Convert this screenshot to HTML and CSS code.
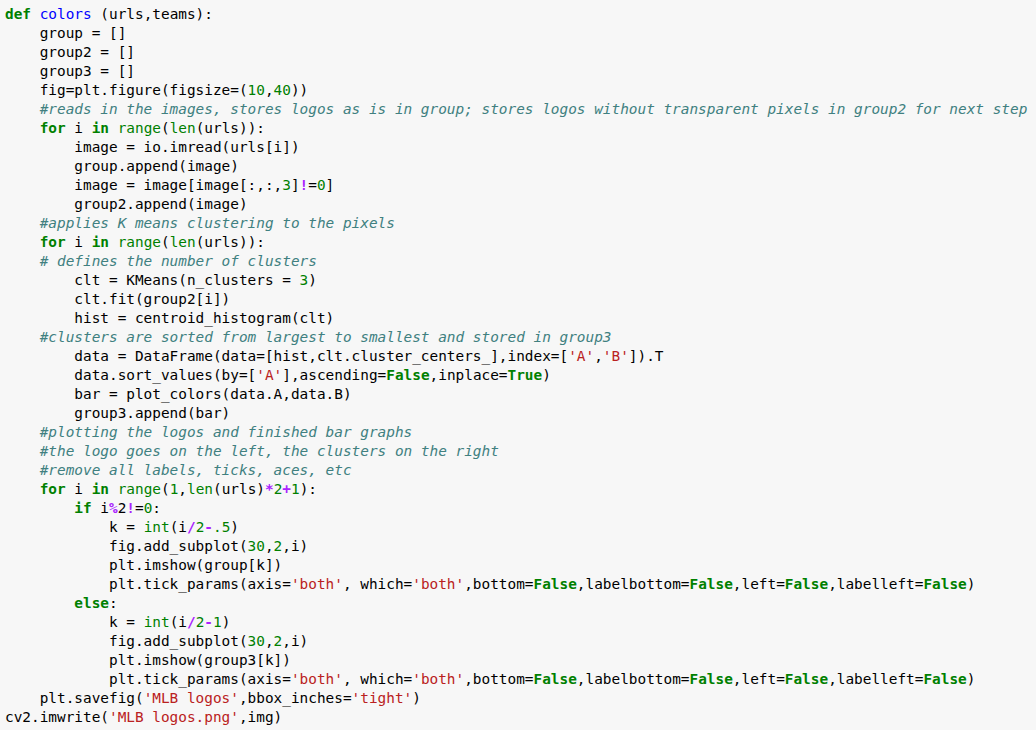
FILE: index.html
```html
<!DOCTYPE html>
<html>
<head>
<meta charset="utf-8">
<link rel="stylesheet" href="styles.css">
</head>
<body>
<div class="cell">
<pre class="code"><span class="k">def</span> <span class="f">colors</span> (urls,teams):
    group = []
    group2 = []
    group3 = []
    fig=plt.figure(figsize=(<span class="n">10</span>,<span class="n">40</span>))
    <span class="c">#reads in the images, stores logos as is in group; stores logos without transparent pixels in group2 for next step</span>
    <span class="k">for</span> i <span class="k">in</span> <span class="b">range</span>(<span class="b">len</span>(urls)):
        image = io.imread(urls[i])
        group.append(image)
        image = image[image[:,:,<span class="n">3</span>]<span class="o">!</span>=<span class="n">0</span>]
        group2.append(image)
    <span class="c">#applies K means clustering to the pixels</span>
    <span class="k">for</span> i <span class="k">in</span> <span class="b">range</span>(<span class="b">len</span>(urls)):
    <span class="c"># defines the number of clusters</span>
        clt = KMeans(n_clusters = <span class="n">3</span>)
        clt.fit(group2[i])
        hist = centroid_histogram(clt)
    <span class="c">#clusters are sorted from largest to smallest and stored in group3</span>
        data = DataFrame(data=[hist,clt.cluster_centers_],index=[<span class="s">'A'</span>,<span class="s">'B'</span>]).T
        data.sort_values(by=[<span class="s">'A'</span>],ascending=<span class="k">False</span>,inplace=<span class="k">True</span>)
        bar = plot_colors(data.A,data.B)
        group3.append(bar)
    <span class="c">#plotting the logos and finished bar graphs</span>
    <span class="c">#the logo goes on the left, the clusters on the right</span>
    <span class="c">#remove all labels, ticks, aces, etc</span>
    <span class="k">for</span> i <span class="k">in</span> <span class="b">range</span>(<span class="n">1</span>,<span class="b">len</span>(urls)<span class="o">*</span><span class="n">2</span><span class="o">+</span><span class="n">1</span>):
        <span class="k">if</span> i<span class="o">%</span>2<span class="o">!</span>=<span class="n">0</span>:
            k = <span class="b">int</span>(i<span class="o">/</span><span class="n">2</span><span class="o">-</span><span class="n">.5</span>)
            fig.add_subplot(<span class="n">30</span>,<span class="n">2</span>,i)
            plt.imshow(group[k])
            plt.tick_params(axis=<span class="s">'both'</span>, which=<span class="s">'both'</span>,bottom=<span class="k">False</span>,labelbottom=<span class="k">False</span>,left=<span class="k">False</span>,labelleft=<span class="k">False</span>)
        <span class="k">else</span>:
            k = <span class="b">int</span>(i<span class="o">/</span><span class="n">2</span><span class="o">-</span><span class="n">1</span>)
            fig.add_subplot(<span class="n">30</span>,<span class="n">2</span>,i)
            plt.imshow(group3[k])
            plt.tick_params(axis=<span class="s">'both'</span>, which=<span class="s">'both'</span>,bottom=<span class="k">False</span>,labelbottom=<span class="k">False</span>,left=<span class="k">False</span>,labelleft=<span class="k">False</span>)
    plt.savefig(<span class="s">'MLB logos'</span>,bbox_inches=<span class="s">'tight'</span>)
cv2.imwrite(<span class="s">'MLB logos.png'</span>,img)</pre>
</div>
</body>
</html>
```

FILE: styles.css
```css
html, body {
  margin: 0;
  padding: 0;
  background: #f7f7f7;
}

.cell {
  width: 1036px;
  height: 730px;
  background: #f7f7f7;
  padding: 5px 0 0 5px;
  box-sizing: border-box;
  overflow: hidden;
}

.code {
  margin: 0;
  font-family: "DejaVu Sans Mono", "Liberation Mono", monospace;
  font-size: 14.4px;
  line-height: 19px;
  color: #000;
  white-space: pre;
}

.k { color: #008000; font-weight: bold; }
.f { color: #0000ff; }
.c { color: #408080; font-style: italic; }
.s { color: #ba2121; }
.n { color: #008000; }
.b { color: #008000; }
.o { color: #aa22ff; font-weight: bold; }
```
